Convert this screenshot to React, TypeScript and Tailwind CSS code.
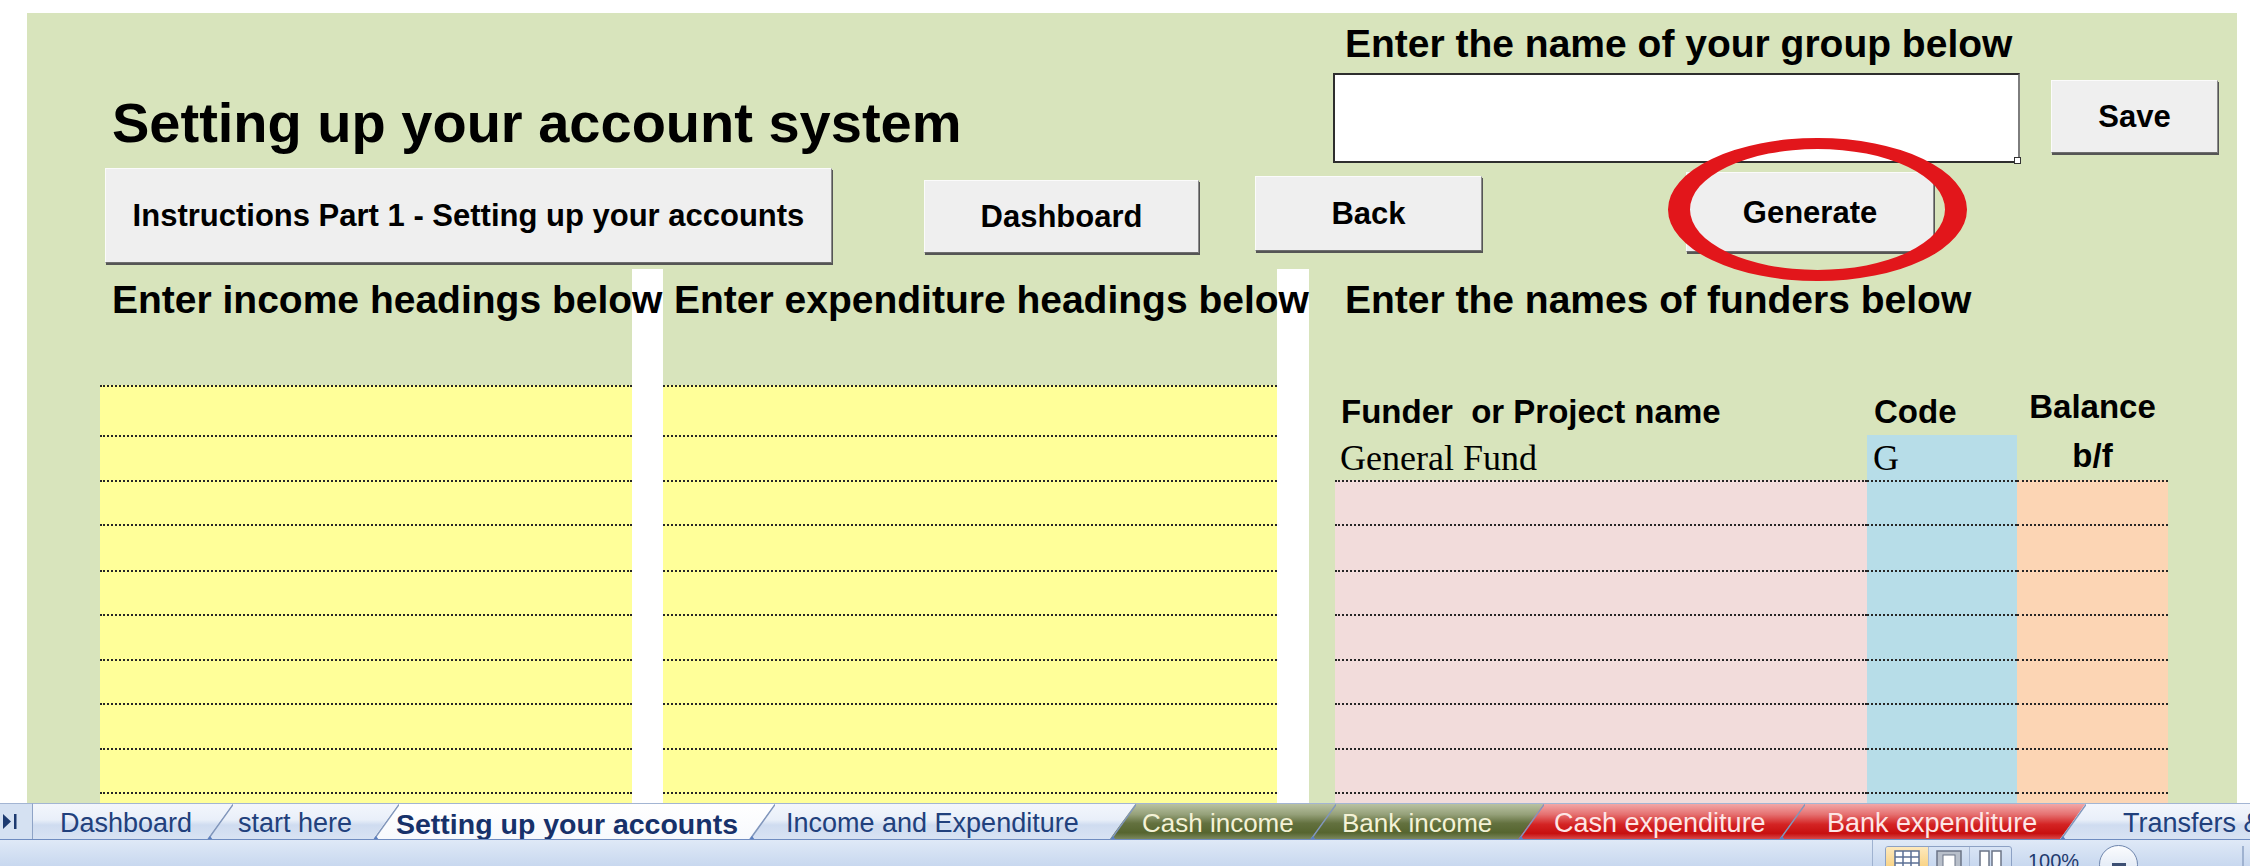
import type { ReactNode } from 'react';

interface BtnProps {
  label: string;
  className: string;
  children?: ReactNode;
}

const Btn = ({ label, className, children }: BtnProps) => {
  return (
    <div
      className={`relative flex shrink-0 items-center justify-center border border-[#fbfbfb] border-r-[#8a8a8a] border-b-[#6e6e6e] bg-[#efefef] text-[31px] font-bold leading-none text-black shadow-[1px_2px_0_0_#555] ${className}`}
    >
      {label}
      {children}
    </div>
  );
};

const rowH = [
  'h-[50px]',
  'h-[45px]',
  'h-[44px]',
  'h-[46px]',
  'h-[44px]',
  'h-[45px]',
  'h-[44px]',
  'h-[45px]',
  'h-[44px]',
  'h-[45px]',
];

const dotted = 'border-t-2 border-dotted border-[#262626]';

const YellowRows = () => {
  return (
    <>
      {rowH.map((h, i) => (
        <div key={i} className={`${h} shrink-0 bg-[#ffff99] ${dotted}`} />
      ))}
    </>
  );
};

const FunderTable = () => {
  return (
    <div className="ml-[26px] flex w-[833px] flex-col">
      <div className="flex h-[50px] shrink-0 text-[33px] font-bold leading-none">
        <div className="w-[532px] pl-[6px] pt-[10px] whitespace-pre">Funder  or Project name</div>
        <div className="w-[150px] pl-[7px] pt-[10px]">Code</div>
        <div className="w-[151px] pt-[5px] text-center">Balance</div>
      </div>
      <div className="flex h-[45px] shrink-0 leading-none">
        <div className="w-[532px] pl-[5px] pt-[5px] font-['Liberation_Serif',serif] text-[36px]">General Fund</div>
        <div className="w-[150px] bg-[#b7dde8] pl-[6px] pt-[5px] font-['Liberation_Serif',serif] text-[36px]">G</div>
        <div className="w-[151px] pt-[4px] text-center text-[33px] font-bold">b/f</div>
      </div>
      {rowH.slice(2).map((h, i) => (
        <div key={i} className={`flex ${h} shrink-0`}>
          <div className={`w-[532px] bg-[#f2dcdb] ${dotted}`} />
          <div className={`w-[150px] bg-[#b7dde8] ${dotted}`} />
          <div className={`w-[151px] bg-[#fcd5b4] ${dotted}`} />
        </div>
      ))}
    </div>
  );
};

interface Tab {
  label: string;
  cls: string;
  text: string;
}

const tabs: Tab[] = [
  {
    label: 'start here',
    cls: 'w-[192px] pl-[31px] bg-[linear-gradient(to_bottom,#f3f6fc_0%,#e9eff9_45%,#cfdcf0_60%,#d8e3f3_100%)]',
    text: 'text-[27px] text-[#21407c]',
  },
  {
    label: 'Setting up your accounts',
    cls: 'w-[402px] pl-[23px] bg-[linear-gradient(to_bottom,#ffffff_0%,#f7f9fd_100%)]',
    text: 'text-[28.5px] text-[#17316a] font-bold',
  },
  {
    label: 'Income and Expenditure',
    cls: 'w-[387px] pl-[37px] bg-[linear-gradient(to_bottom,#f3f6fc_0%,#e9eff9_45%,#cfdcf0_60%,#d8e3f3_100%)]',
    text: 'text-[27px] text-[#21407c]',
  },
  {
    label: 'Cash income',
    cls: 'w-[226px] pl-[32px] bg-[linear-gradient(to_bottom,#b9c2a2_0%,#95a079_30%,#63713f_55%,#56652f_82%,#7a875c_100%)]',
    text: 'text-[26px] text-[#f4f2d6]',
  },
  {
    label: 'Bank income',
    cls: 'w-[234px] pl-[32px] bg-[linear-gradient(to_bottom,#b9c2a2_0%,#95a079_30%,#63713f_55%,#56652f_82%,#7a875c_100%)]',
    text: 'text-[26px] text-[#f4f2d6]',
  },
  {
    label: 'Cash expenditure',
    cls: 'w-[287px] pl-[36px] bg-[linear-gradient(to_bottom,#f2a7a7_0%,#e57070_30%,#d42424_58%,#c70f0f_84%,#d84848_100%)]',
    text: 'text-[27px] text-[#fde6e6]',
  },
  {
    label: 'Bank expenditure',
    cls: 'w-[307px] pl-[48px] bg-[linear-gradient(to_bottom,#f2a7a7_0%,#e57070_30%,#d42424_58%,#c70f0f_84%,#d84848_100%)]',
    text: 'text-[27px] text-[#fde6e6]',
  },
  {
    label: 'Transfers & adjustments',
    cls: 'flex-1 pl-[63px] bg-[linear-gradient(to_bottom,#f3f6fc_0%,#e9eff9_45%,#cfdcf0_60%,#d8e3f3_100%)]',
    text: 'text-[27px] text-[#21407c]',
  },
];

const TabBar = () => {
  return (
    <div className="flex h-[37px] shrink-0 overflow-hidden border-b border-[#6f8cc0] bg-[#d5e1f2]">
      <div className="flex w-[33px] shrink-0 items-center border-t border-r border-[#a3b5d3] border-r-[#8ea3c6] pl-[3px]">
        <svg width="14" height="15" viewBox="0 0 14 15">
          <polygon points="0,0 8,7.5 0,15" fill="#1d3a70" />
          <rect x="11" y="0" width="2.5" height="15" fill="#1d3a70" />
        </svg>
      </div>
      <div className="w-[200px] shrink-0 border-t border-[#a3b5d3] bg-[linear-gradient(to_bottom,#f3f6fc_0%,#e9eff9_45%,#cfdcf0_60%,#d8e3f3_100%)] pl-[27px]">
        <span className="block whitespace-nowrap pt-[6px] text-[27px] leading-none text-[#21407c]">Dashboard</span>
      </div>
      {tabs.map((t) => (
        <div
          key={t.label}
          className={`relative -ml-[26px] h-full shrink-0 overflow-hidden border-t border-[#a3b5d3] [clip-path:polygon(0_100%,26px_0,100%_0,100%_100%)] ${t.cls}`}
        >
          <svg className="absolute left-0 top-0 h-[36px] w-[26px]" viewBox="0 0 26 36">
            <line x1="0.5" y1="36" x2="26" y2="0.5" stroke="#8196bb" strokeWidth="1.6" />
            <polygon points="0,36 6,36 3,32" fill="#5b7fc0" />
          </svg>
          <span className={`block whitespace-nowrap pt-[6px] leading-none ${t.text}`}>{t.label}</span>
        </div>
      ))}
    </div>
  );
};

const StatusBar = () => {
  return (
    <div className="flex h-[26px] shrink-0 overflow-hidden bg-[linear-gradient(to_bottom,#dfe9f7,#c8d8ef)]">
      <div className="flex-1" />
      <div className="flex w-[378px] shrink-0 items-start border-l border-[#9fb2d0] pt-[6px]">
        <div className="ml-[12px] flex h-[32px] w-[127px] shrink-0 overflow-hidden rounded-[3px] border border-[#8ca1c4]">
          <div className="flex w-[42px] justify-center bg-[linear-gradient(to_bottom,#fde9bd,#f7c869)] pt-[3px]">
            <svg width="26" height="22" viewBox="0 0 26 22">
              <rect x="1" y="1" width="24" height="20" fill="#ffffff" stroke="#5b6f94" strokeWidth="1.5" />
              <line x1="1" y1="7" x2="25" y2="7" stroke="#5b6f94" strokeWidth="1.5" />
              <line x1="1" y1="13" x2="25" y2="13" stroke="#5b6f94" strokeWidth="1.5" />
              <line x1="9" y1="1" x2="9" y2="21" stroke="#5b6f94" strokeWidth="1.5" />
              <line x1="17" y1="1" x2="17" y2="21" stroke="#5b6f94" strokeWidth="1.5" />
            </svg>
          </div>
          <div className="flex w-[42px] justify-center border-l border-[#a9bad6] pt-[3px]">
            <svg width="26" height="22" viewBox="0 0 26 22">
              <rect x="1" y="1" width="24" height="20" fill="#b8bfca" stroke="#6b7486" strokeWidth="1.5" />
              <rect x="7" y="5" width="12" height="16" fill="#ffffff" stroke="#6b7486" strokeWidth="1" />
            </svg>
          </div>
          <div className="flex w-[42px] justify-center border-l border-[#a9bad6] pt-[3px]">
            <svg width="26" height="22" viewBox="0 0 26 22">
              <rect x="2" y="1" width="9" height="20" fill="#ffffff" stroke="#6b7486" strokeWidth="1.5" />
              <rect x="14" y="1" width="9" height="20" fill="#ffffff" stroke="#6b7486" strokeWidth="1.5" />
            </svg>
          </div>
        </div>
        <span className="ml-[16px] mt-[5px] shrink-0 text-[20px] leading-none text-[#1f3a6e]">100%</span>
        <div className="ml-[20px] flex h-[39px] w-[39px] shrink-0 items-center justify-center rounded-full border border-[#6f86ad] bg-[linear-gradient(to_bottom,#fbfcfe,#d3dff0)] -mt-[1px]">
          <div className="h-[3px] w-[14px] bg-[#3c4f73]" />
        </div>
        <div className="ml-[104px] h-[26px] w-[2px] shrink-0 bg-[#9fb2d0]" />
      </div>
    </div>
  );
};

const App = () => {
  return (
    <div className="flex h-[866px] w-[2250px] flex-col overflow-hidden bg-white font-['Liberation_Sans',Arial,sans-serif] text-black">
      <div className="h-[803px] shrink-0 overflow-hidden pl-[27px] pr-[13px] pt-[13px]">
        <div className="flex h-[790px] w-[2210px] flex-col overflow-hidden bg-[#d8e4bc]">
          {/* title + group name */}
          <div className="flex h-[155px] shrink-0">
            <div className="w-[1306px] shrink-0 pl-[85px] pt-[82px]">
              <h1 className="whitespace-nowrap text-[56px] font-bold leading-none">Setting up your account system</h1>
            </div>
            <div className="flex flex-col">
              <div className="mt-[11px] whitespace-nowrap pl-[12px] text-[39px] font-bold leading-none">
                Enter the name of your group below
              </div>
              <div className="mt-[10px] flex items-start">
                <div className="relative h-[90px] w-[687px] border-2 border-[#2e2e2e] border-r-[#7d7d7d] bg-white">
                  <span className="absolute -bottom-[3px] -right-[3px] h-[7px] w-[7px] border border-[#333] bg-white" />
                </div>
                <Btn label="Save" className="ml-[31px] mt-[7px] h-[73px] w-[167px]" />
              </div>
            </div>
          </div>

          {/* buttons */}
          <div className="flex h-[101px] shrink-0 items-start">
            <Btn label="Instructions Part 1 - Setting up your accounts" className="ml-[78px] h-[95px] w-[727px]" />
            <Btn label="Dashboard" className="ml-[92px] mt-[12px] h-[73px] w-[275px]" />
            <Btn label="Back" className="ml-[56px] mt-[8px] h-[75px] w-[227px]" />
            <Btn label="Generate" className="ml-[204px] mt-[4px] h-[80px] w-[248px]">
              <svg
                className="pointer-events-none absolute -left-[19px] -top-[35px] z-20 h-[143px] w-[299px]"
                viewBox="0 0 299 143"
              >
                <path
                  fillRule="evenodd"
                  fill="#e2161b"
                  d="M0 71.5 A149.5 71.5 0 1 0 299 71.5 A149.5 71.5 0 1 0 0 71.5 Z M22 71.5 A127.5 60.5 0 1 0 277 71.5 A127.5 60.5 0 1 0 22 71.5 Z"
                />
              </svg>
            </Btn>
          </div>

          {/* sheet columns */}
          <div className="flex min-h-0 flex-1">
            <div className="w-[73px] shrink-0" />
            <div className="flex w-[532px] shrink-0 flex-col">
              <div className="relative z-10 h-[116px] shrink-0 whitespace-nowrap pl-[12px] pt-[11px] text-[39px] font-bold leading-none">
                Enter income headings below
              </div>
              <YellowRows />
            </div>
            <div className="w-[31px] shrink-0 bg-white" />
            <div className="flex w-[614px] shrink-0 flex-col">
              <div className="relative z-10 h-[116px] shrink-0 whitespace-nowrap pl-[11px] pt-[11px] text-[39px] font-bold leading-none">
                Enter expenditure headings below
              </div>
              <YellowRows />
            </div>
            <div className="w-[32px] shrink-0 bg-white" />
            <div className="flex flex-1 flex-col">
              <div className="h-[116px] shrink-0 whitespace-nowrap pl-[36px] pt-[11px] text-[39px] font-bold leading-none">
                Enter the names of funders below
              </div>
              <FunderTable />
            </div>
          </div>
        </div>
      </div>
      <TabBar />
      <StatusBar />
    </div>
  );
};

export default App;
